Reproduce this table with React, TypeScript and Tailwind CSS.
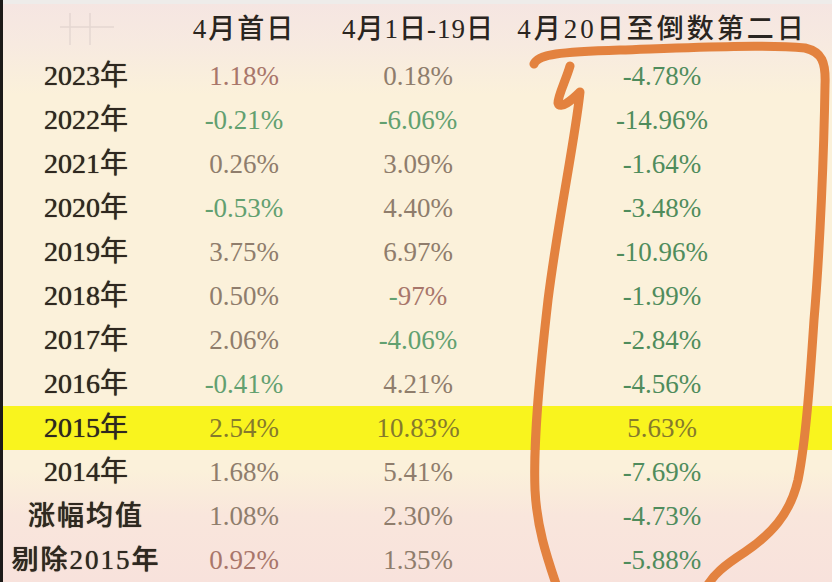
import React from 'react';

type Cell = { v: string; c: string; pre?: string };

const G = '#62a070';
const G2 = '#4f8c5c';
const B = '#8f7d6c';
const R = '#a8766a';
const O = '#857a2c';

const rows: { label: string; cells: Cell[]; hl?: boolean; cjk?: boolean }[] = [
  { label: '2023年', cells: [{ v: '1.18%', c: R }, { v: '0.18%', c: B }, { v: '-4.78%', c: G2 }] },
  { label: '2022年', cells: [{ v: '-0.21%', c: G }, { v: '-6.06%', c: G }, { v: '-14.96%', c: G2 }] },
  { label: '2021年', cells: [{ v: '0.26%', c: B }, { v: '3.09%', c: B }, { v: '-1.64%', c: G2 }] },
  { label: '2020年', cells: [{ v: '-0.53%', c: G }, { v: '4.40%', c: B }, { v: '-3.48%', c: G2 }] },
  { label: '2019年', cells: [{ v: '3.75%', c: B }, { v: '6.97%', c: B }, { v: '-10.96%', c: G2 }] },
  { label: '2018年', cells: [{ v: '0.50%', c: B }, { v: '97%', c: R, pre: '-' }, { v: '-1.99%', c: G2 }] },
  { label: '2017年', cells: [{ v: '2.06%', c: B }, { v: '-4.06%', c: G }, { v: '-2.84%', c: G2 }] },
  { label: '2016年', cells: [{ v: '-0.41%', c: G }, { v: '4.21%', c: B }, { v: '-4.56%', c: G2 }] },
  { label: '2015年', hl: true, cells: [{ v: '2.54%', c: O }, { v: '10.83%', c: O }, { v: '5.63%', c: O }] },
  { label: '2014年', cells: [{ v: '1.68%', c: B }, { v: '5.41%', c: B }, { v: '-7.69%', c: G2 }] },
  { label: '涨幅均值', cjk: true, cells: [{ v: '1.08%', c: B }, { v: '2.30%', c: B }, { v: '-4.73%', c: G2 }] },
  { label: '剔除2015年', cjk: true, cells: [{ v: '0.92%', c: R }, { v: '1.35%', c: B }, { v: '-5.88%', c: G2 }] },
];

const cols = 'grid grid-cols-[166px_150px_198px_290px_1fr]';

export default function App() {
  return (
    <div className="relative flex h-[582px] w-[832px] overflow-hidden font-['Liberation_Serif','Noto_Sans_CJK_SC',serif]">
      <div className="w-[3px] shrink-0 bg-[#1c1a18]" />
      <div className="flex flex-1 flex-col bg-[linear-gradient(180deg,#f5e5e2_0px,#f7eae0_45px,#fbf1da_95px,#fbf1da_470px,#f9e6dc_515px,#f8e2dc_582px)]">
        <div className="h-[4px] bg-[#eeecea]" />
        <div className={`${cols} h-[50px] items-center text-[27px] font-medium text-[#2a2520]`}>
          <div className="flex justify-center">
            <svg width="60" height="36" viewBox="0 0 60 36" className="opacity-40">
              <path d="M4 16 H58 M14 2 V34 M34 2 V34" stroke="#cbbfbc" strokeWidth="1.5" fill="none" />
            </svg>
          </div>
          <div className="text-center tracking-[2px]">4月首日</div>
          <div className="text-center tracking-[1px]">4月1日-19日</div>
          <div className="text-center tracking-[3px]">4月20日至倒数第二日</div>
          <div />
        </div>
        {rows.map((r) => (
          <div
            key={r.label}
            className={`${cols} h-[44px] items-center text-[27px] ${r.hl ? 'bg-[#f9f41e]' : ''}`}
          >
            <div
              className={`text-center text-[#2f2820] [text-shadow:0_0_0.8px_#2f2820] ${r.cjk ? 'font-medium tracking-[2px]' : 'text-[28px]'}`}
            >
              {r.label}
            </div>
            {r.cells.map((c, i) => (
              <div key={i} className="text-center" style={{ color: c.c }}>
                {c.pre ? <span className="text-[#62a070]">{c.pre}</span> : null}
                {c.v}
              </div>
            ))}
            <div />
          </div>
        ))}
      </div>
      <svg className="pointer-events-none absolute left-0 top-0" width="832" height="582" viewBox="0 0 832 582">
        <g fill="none" stroke="#e3823f" strokeWidth="9" strokeLinecap="round" strokeLinejoin="round">
          <path d="M534 64 C538 54 560 52 620 50 C680 48 760 44 805 48 C822 52 826 62 825 85 C824 150 820 250 814 320 C810 380 806 440 798 480 C790 515 770 535 745 552 C725 565 712 575 705 590" />
          <path d="M570 66 C566 80 558 95 558 103 C560 110 572 100 580 92 C575 140 558 220 548 300 C540 370 533 440 535 490 C537 530 548 560 558 590" />
        </g>
      </svg>
    </div>
  );
}
